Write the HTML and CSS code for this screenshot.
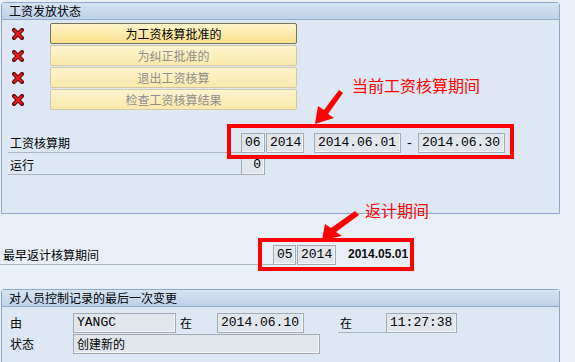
FILE: index.html
```html
<!DOCTYPE html>
<html lang="zh-CN">
<head>
    <meta charset="UTF-8">
    <title>工资发放状态</title>
    <link rel="stylesheet" href="styles.css">
</head>
<body>
    <div class="group status">
        <div class="group-title">工资发放状态</div>
        <ul class="steps">
            <li><span class="xmark"><svg width="12" height="12" viewBox="0 0 12 12"><path d="M2 2L10 10M10 2L2 10" stroke="#5a0a0a" stroke-width="4" stroke-linecap="round"/><path d="M2.5 2.5L9.5 9.5M9.5 2.5L2.5 9.5" stroke="#e81c1c" stroke-width="2.2" stroke-linecap="round"/></svg></span><button class="step active">为工资核算批准的</button></li>
            <li><span class="xmark"><svg width="12" height="12" viewBox="0 0 12 12"><path d="M2 2L10 10M10 2L2 10" stroke="#5a0a0a" stroke-width="4" stroke-linecap="round"/><path d="M2.5 2.5L9.5 9.5M9.5 2.5L2.5 9.5" stroke="#e81c1c" stroke-width="2.2" stroke-linecap="round"/></svg></span><button class="step">为纠正批准的</button></li>
            <li><span class="xmark"><svg width="12" height="12" viewBox="0 0 12 12"><path d="M2 2L10 10M10 2L2 10" stroke="#5a0a0a" stroke-width="4" stroke-linecap="round"/><path d="M2.5 2.5L9.5 9.5M9.5 2.5L2.5 9.5" stroke="#e81c1c" stroke-width="2.2" stroke-linecap="round"/></svg></span><button class="step">退出工资核算</button></li>
            <li><span class="xmark"><svg width="12" height="12" viewBox="0 0 12 12"><path d="M2 2L10 10M10 2L2 10" stroke="#5a0a0a" stroke-width="4" stroke-linecap="round"/><path d="M2.5 2.5L9.5 9.5M9.5 2.5L2.5 9.5" stroke="#e81c1c" stroke-width="2.2" stroke-linecap="round"/></svg></span><button class="step">检查工资核算结果</button></li>
        </ul>
        <div class="fields">
            <div class="row">
                <span class="label period-label">工资核算期</span>
                <span class="field w2">06</span>
                <span class="field w4">2014</span>
                <span class="field date">2014.06.01</span>
                <span class="dash">-</span>
                <span class="field date">2014.06.30</span>
            </div>
            <div class="row">
                <span class="label period-label">运行</span>
                <span class="field w2 right">0</span>
            </div>
        </div>
    </div>

    <div class="row retro">
        <span class="label retro-label">最早返计核算期间</span>
        <span class="field w2">05</span>
        <span class="field w4">2014</span>
        <span class="plain-date">2014.05.01</span>
    </div>

    <div class="group history">
        <div class="group-title">对人员控制记录的最后一次变更</div>
        <div class="history-body">
            <div class="row">
                <span class="hlabel">由</span>
                <span class="field user">YANGC</span>
                <span class="hlabel at">在</span>
                <span class="field date">2014.06.10</span>
                <span class="hlabel at2">在</span>
                <span class="field time">11:27:38</span>
            </div>
            <div class="row">
                <span class="hlabel">状态</span>
                <span class="field state">创建新的</span>
            </div>
        </div>
    </div>

    <!-- annotations drawn on top of the screen -->
    <div class="redbox box-current"></div>
    <div class="redbox box-retro"></div>
    <div class="note note-current">当前工资核算期间</div>
    <div class="note note-retro">返计期间</div>
    <svg class="arrows" width="575" height="362" viewBox="0 0 575 362">
        <polygon points="315,124 318,106 324,110 339,90 343,93 328,114 334,118" fill="#ff0000"/>
        <polygon points="322,240 325,224 331,228 355,211 359,215 336,232 342,236" fill="#ff0000"/>
    </svg>
</body>
</html>
```

FILE: styles.css
```css
* {
    margin: 0;
    padding: 0;
    box-sizing: border-box;
}

body {
    position: relative;
    width: 575px;
    height: 362px;
    overflow: hidden;
    background-color: #e9eff7;
    color: #000;
    font-family: "Noto Sans CJK SC", sans-serif;
    font-size: 12px;
}

.group {
    margin-left: 1px;
    width: 559px;
    border: 1px solid #8fa9cb;
    border-radius: 3px 3px 0 0;
    background-color: #dde8f4;
}

.group-title {
    height: 17px;
    line-height: 16px;
    padding-left: 7px;
    background: linear-gradient(#d5e3f3, #bdd2ea);
    border-bottom: 1px solid #8fa9cb;
}

.status {
    margin-top: 2px;
    height: 212px;
}

.steps {
    list-style: none;
    display: flex;
    flex-direction: column;
    gap: 1px;
    padding: 3px 0 0 10px;
}

.steps li {
    display: flex;
    align-items: center;
    height: 21px;
}

.xmark {
    width: 12px;
    height: 12px;
    display: flex;
}

.step {
    margin-left: 26px;
    width: 247px;
    height: 21px;
    border: 1px solid #d2c9a4;
    border-radius: 2px;
    background: linear-gradient(#fdf4cf, #fbe9ab);
    color: #8e8e8e;
    font-family: "Noto Sans CJK SC", sans-serif;
    font-size: 12px;
    line-height: 18px;
}

.step.active {
    border-color: #77725f;
    background: linear-gradient(#fef5cc, #fbe08c);
    color: #000;
}

.fields {
    display: flex;
    flex-direction: column;
    gap: 2px;
    margin-top: 23px;
}

.row {
    display: flex;
    align-items: flex-end;
    height: 20px;
}

.fields .row {
    padding-left: 6px;
}

.label {
    height: 20px;
    line-height: 19px;
    border-bottom: 1px solid #a9b5c3;
}

.period-label {
    width: 233px;
    padding-left: 2px;
}

.field {
    height: 20px;
    border: 1px solid #a3abb4;
    background-color: #e0e6ec;
    box-shadow: inset -1px -1px 0 #f4f6f8;
    font-family: "Liberation Mono", "Noto Sans CJK SC", monospace;
    font-size: 13px;
    line-height: 18px;
    padding: 0 3px;
    white-space: nowrap;
}

.w2 {
    width: 24px;
}

.w4 {
    width: 38px;
    margin-left: 1px;
}

.right {
    text-align: right;
}

.date {
    width: 87px;
    margin-left: 10px;
}

.dash {
    width: 17px;
    text-align: center;
    font-family: "Liberation Mono", monospace;
    font-size: 13px;
    line-height: 18px;
}

.dash + .date {
    margin-left: 0;
}

.retro {
    margin-top: 31px;
}

.retro-label {
    width: 273px;
    padding-left: 3px;
}

.retro .w2 {
    width: 23px;
}

.retro .w4 {
    width: 39px;
}

.plain-date {
    margin-left: 12px;
    height: 20px;
    line-height: 19px;
    font-family: "Liberation Sans", sans-serif;
    font-weight: bold;
    font-size: 12px;
    color: #111;
}

.history {
    margin-top: 24px;
    height: 90px;
}

.history-body {
    display: flex;
    flex-direction: column;
    gap: 1px;
    padding-top: 6px;
}

.hlabel {
    width: 71px;
    height: 20px;
    line-height: 19px;
    padding-left: 8px;
}

.hlabel.at {
    width: 41px;
    padding-left: 4px;
}

.hlabel.at2 {
    width: 48px;
    margin-left: 34px;
    padding-left: 2px;
    border-bottom: 1px solid #a9b5c3;
}

.history .date {
    margin-left: 0;
}

.user {
    width: 103px;
}

.time {
    width: 71px;
}

.state {
    width: 247px;
    font-family: "Noto Sans CJK SC", sans-serif;
    font-size: 12px;
}

/* red markup */
.redbox {
    position: absolute;
    border: 4px solid #ff0000;
}

.box-current {
    left: 227px;
    top: 124px;
    width: 287px;
    height: 35px;
}

.box-retro {
    left: 258px;
    top: 238px;
    width: 156px;
    height: 33px;
}

.note {
    position: absolute;
    color: #ff0000;
    font-size: 16px;
    line-height: 16px;
    white-space: nowrap;
}

.note-current {
    left: 352px;
    top: 77px;
}

.note-retro {
    left: 365px;
    top: 202px;
}

.arrows {
    position: absolute;
    left: 0;
    top: 0;
    pointer-events: none;
}
```
